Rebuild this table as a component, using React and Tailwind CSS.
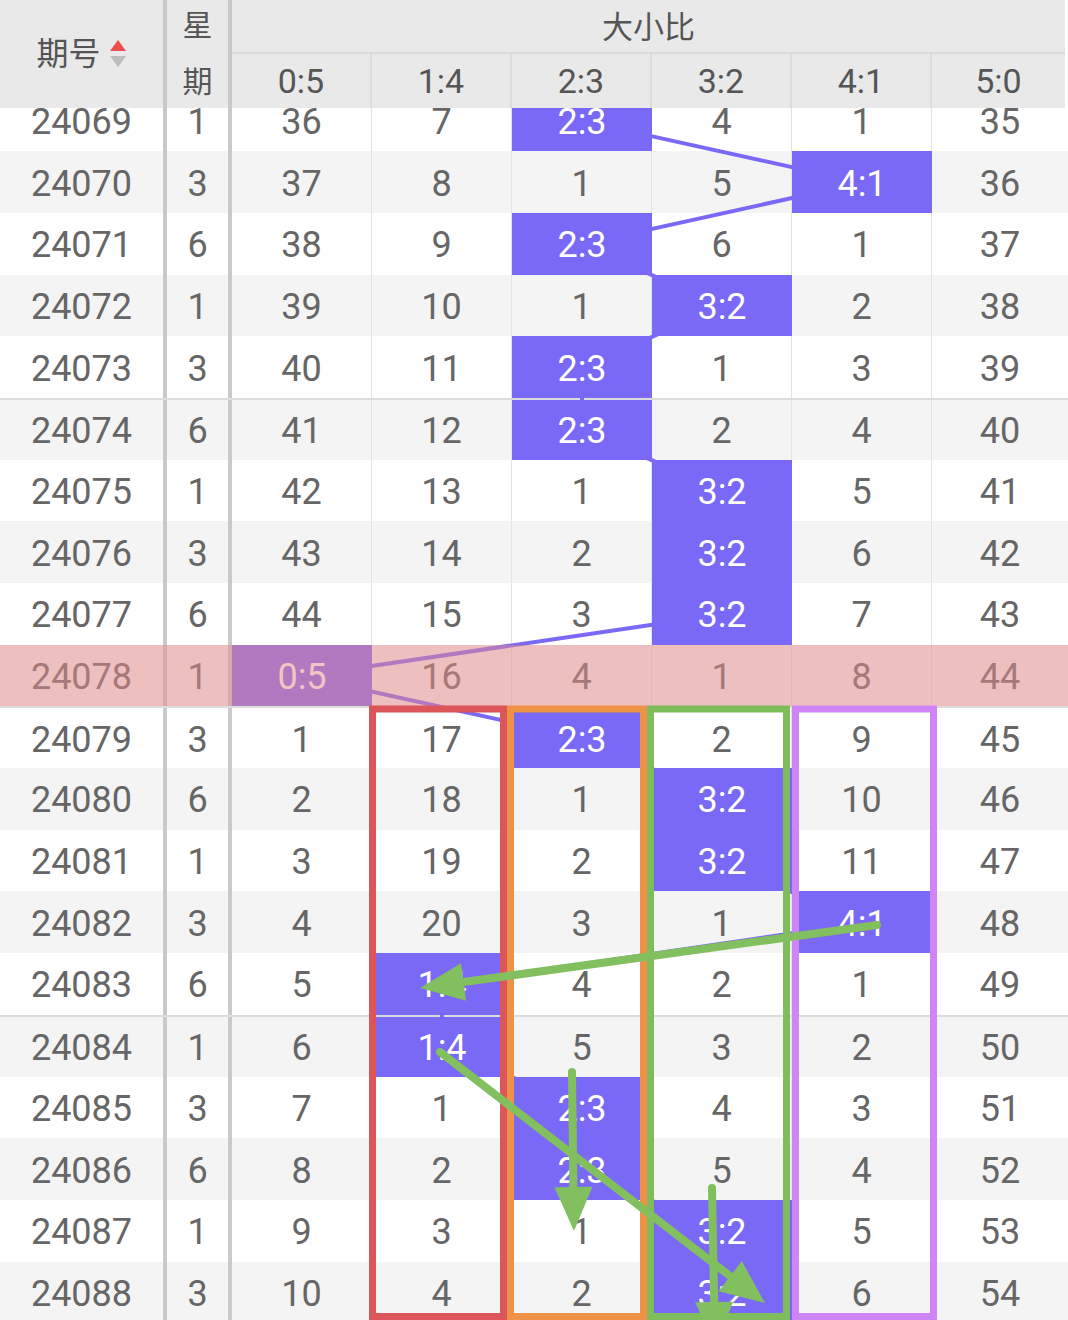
const HL = '#7a68f6'
const RH = 61.7
const labels = ['0:5', '1:4', '2:3', '3:2', '4:1', '5:0']

// [期号, 星期, 命中列, 各列遗漏值]
const rows = [
  ['24069', 1, 2, [36, 7, 0, 4, 1, 35]],
  ['24070', 3, 4, [37, 8, 1, 5, 0, 36]],
  ['24071', 6, 2, [38, 9, 0, 6, 1, 37]],
  ['24072', 1, 3, [39, 10, 1, 0, 2, 38]],
  ['24073', 3, 2, [40, 11, 0, 1, 3, 39]],
  ['24074', 6, 2, [41, 12, 0, 2, 4, 40]],
  ['24075', 1, 3, [42, 13, 1, 0, 5, 41]],
  ['24076', 3, 3, [43, 14, 2, 0, 6, 42]],
  ['24077', 6, 3, [44, 15, 3, 0, 7, 43]],
  ['24078', 1, 0, [0, 16, 4, 1, 8, 44]],
  ['24079', 3, 2, [1, 17, 0, 2, 9, 45]],
  ['24080', 6, 3, [2, 18, 1, 0, 10, 46]],
  ['24081', 1, 3, [3, 19, 2, 0, 11, 47]],
  ['24082', 3, 4, [4, 20, 3, 1, 0, 48]],
  ['24083', 6, 1, [5, 0, 4, 2, 1, 49]],
  ['24084', 1, 1, [6, 0, 5, 3, 2, 50]],
  ['24085', 3, 2, [7, 1, 0, 4, 3, 51]],
  ['24086', 6, 2, [8, 2, 0, 5, 4, 52]],
  ['24087', 1, 3, [9, 3, 1, 0, 5, 53]],
  ['24088', 3, 3, [10, 4, 2, 0, 6, 54]],
]

const points = rows
  .map(([, , hit], i) => `${232 + 140 * hit + 70},${(i * RH + RH / 2).toFixed(1)}`)
  .join(' ')

function SortIcon() {
  return (
    <svg width="18" height="28" viewBox="0 0 18 28" className="ml-2">
      <polygon points="9,0 17,11 1,11" fill="#ee4d4d" />
      <polygon points="1,16 17,16 9,27" fill="#bdbdbd" />
    </svg>
  )
}

function Row({ row, i }) {
  const [period, week, hit, vals] = row
  const divider = i === 5 || i === 10 || i === 15
  return (
    <div
      className={`relative flex h-[61.7px] ${i % 2 ? 'bg-[#f4f4f4]' : 'bg-white'} ${divider ? 'border-t-2 border-[#dcdcdc]' : ''}`}
    >
      <div className="w-[167px] shrink-0 pt-[3px] border-r-4 border-[#c9c9c9] flex items-center justify-center">{period}</div>
      <div className="w-[65px] shrink-0 pt-[3px] border-r-4 border-[#c9c9c9] flex items-center justify-center">{week}</div>
      {vals.map((v, k) =>
        k === hit ? (
          <div
            key={k}
            className={`relative z-20 pt-[3px] flex items-center justify-center bg-[#7a68f6] text-white ${k < 5 ? 'w-[140px] shrink-0' : 'flex-1'}`}
          >
            {labels[k]}
          </div>
        ) : (
          <div
            key={k}
            className={`pt-[3px] flex items-center justify-center ${k < 5 ? 'w-[140px] shrink-0 border-r border-[#e3e3e3]' : 'flex-1'}`}
          >
            {v}
          </div>
        )
      )}
      {i === 9 && <div className="absolute inset-0 z-30 bg-[rgba(230,138,138,0.5)]" />}
    </div>
  )
}

function Arrow({ x1, y1, x2, y2 }) {
  const dx = x2 - x1
  const dy = y2 - y1
  const len = Math.hypot(dx, dy)
  const ux = dx / len
  const uy = dy / len
  const bx = x2 - 44 * ux
  const by = y2 - 44 * uy
  const w = 19
  const pts = `${x2},${y2} ${bx - uy * w},${by + ux * w} ${bx + uy * w},${by - ux * w}`
  return (
    <g>
      <line x1={x1} y1={y1} x2={bx} y2={by} stroke="#82bf5e" strokeWidth="8" strokeLinecap="round" />
      <polygon points={pts} fill="#82bf5e" />
    </g>
  )
}

export default function App() {
  return (
    <div
      className="relative w-[1068px] h-[1320px] overflow-hidden bg-white text-[#666]"
      style={{ fontFamily: 'Roboto, "Noto Sans CJK SC", sans-serif' }}
    >
      {/* 表头 */}
      <div className="flex h-[108px] bg-[#e9e9e9] text-[#555] border-r-[3px] border-white">
        <div className="w-[167px] shrink-0 border-r-4 border-[#c9c9c9] flex items-center justify-center text-[32px]">
          期号
          <SortIcon />
        </div>
        <div className="w-[65px] shrink-0 border-r-4 border-[#c9c9c9] flex flex-col text-[30px]">
          <div className="h-[54px] pb-1 flex items-center justify-center">星</div>
          <div className="h-[54px] flex items-center justify-center">期</div>
        </div>
        <div className="flex-1 flex flex-col">
          <div className="h-[54px] pt-1 border-b-2 border-[#d9d9d9] flex items-center justify-center text-[31px]">大小比</div>
          <div className="flex flex-1 text-[34px]">
            {labels.map((l, k) => (
              <div
                key={l}
                className={`flex items-center justify-center ${k < 5 ? 'w-[140px] shrink-0 border-r-2 border-[#dcdcdc]' : 'flex-1'}`}
              >
                {l}
              </div>
            ))}
          </div>
        </div>
      </div>

      {/* 数据 */}
      <div className="h-[1212px] overflow-hidden text-[36px]">
        <div className="relative mt-[-18.5px]">
          {rows.map((r, i) => (
            <Row key={r[0]} row={r} i={i} />
          ))}
          <svg className="absolute inset-0 z-10 pointer-events-none" width="1068" height={rows.length * RH}>
            <polyline points={points} fill="none" stroke={HL} strokeWidth="4" />
          </svg>
        </div>
      </div>

      {/* 标注 */}
      <svg className="absolute inset-0 z-40 pointer-events-none" width="1068" height="1320">
        <rect x="372.5" y="709" width="131" height="607.5" fill="none" stroke="#dc5559" strokeWidth="7" />
        <rect x="510.5" y="709" width="133" height="607.5" fill="none" stroke="#ee9247" strokeWidth="7" />
        <rect x="650.5" y="709" width="136" height="607.5" fill="none" stroke="#7fbd5c" strokeWidth="7" />
        <rect x="795.5" y="709" width="138" height="607.5" fill="none" stroke="#cf85f5" strokeWidth="7" />
        <Arrow x1={877} y1={925} x2={420} y2={988} />
        <Arrow x1={440} y1={1052} x2={765} y2={1303} />
        <Arrow x1={572} y1={1072} x2={574} y2={1231} />
        <Arrow x1={712} y1={1188} x2={715} y2={1346} />
      </svg>
    </div>
  )
}
